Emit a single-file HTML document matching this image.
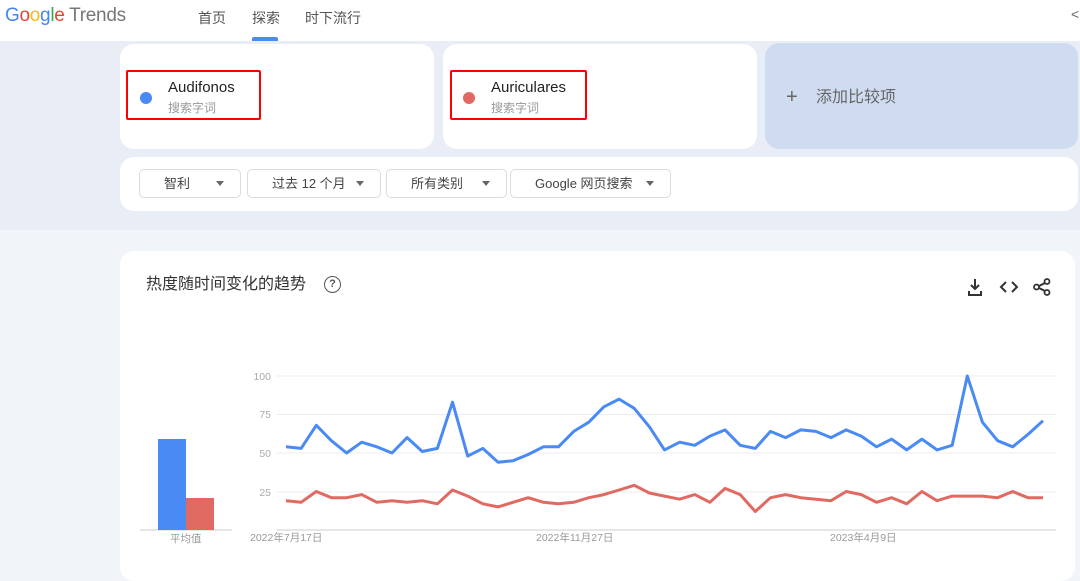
<!DOCTYPE html><html><head><meta charset="utf-8"><style>
*{margin:0;padding:0;box-sizing:border-box}
body{width:1080px;height:559px;overflow:hidden;background:#f1f4f9;font-family:"Liberation Sans","Noto Sans CJK SC",sans-serif;position:relative}
.a{position:absolute}
.card{position:absolute;background:#fff;border-radius:14px}
.btn{position:absolute;top:12px;height:29px;border:1px solid #dadce0;border-radius:5px;font-size:13px;color:#444;line-height:27px;padding-left:24px}
.btn:after{content:"";position:absolute;right:16px;top:11px;border:4.5px solid transparent;border-top:5px solid #666}
</style></head><body>
<div class="a" style="left:0;top:0;width:1080px;height:41px;background:#fff"></div>
<div class="a" style="left:0;top:41px;width:1080px;height:189px;background:#e8edf6"></div>
<div class="a" style="left:5px;top:5px;font-size:19px;letter-spacing:-0.3px"><span style="color:#4285f4">G</span><span style="color:#ea4335">o</span><span style="color:#fbbc05">o</span><span style="color:#4285f4">g</span><span style="color:#34a853">l</span><span style="color:#ea4335">e</span><span style="color:#777"> Trends</span></div>
<div class="a" style="left:198px;top:8px;font-size:14px;color:#555">首页</div>
<div class="a" style="left:252px;top:8px;font-size:14px;color:#555">探索</div>
<div class="a" style="left:252px;top:37px;width:26px;height:4px;background:#4a8af4;border-radius:2px 2px 0 0"></div>
<div class="a" style="left:305px;top:8px;font-size:14px;color:#555">时下流行</div>
<div class="a" style="left:1071px;top:6px;font-size:14px;color:#666">&lt;</div>
<div class="card" style="left:120px;top:44px;width:314px;height:105px"></div>
<div class="a" style="left:126px;top:70px;width:135px;height:50px;border:2px solid #f00;border-radius:2px"></div>
<div class="a" style="left:140px;top:92px;width:12px;height:12px;border-radius:50%;background:#4a8af4"></div>
<div class="a" style="left:168px;top:79px;font-size:15px;color:#222">Audifonos</div>
<div class="a" style="left:168px;top:99px;font-size:12px;color:#999">搜索字词</div>
<div class="card" style="left:443px;top:44px;width:314px;height:105px"></div>
<div class="a" style="left:450px;top:70px;width:137px;height:50px;border:2px solid #f00;border-radius:2px"></div>
<div class="a" style="left:463px;top:92px;width:12px;height:12px;border-radius:50%;background:#e06a62"></div>
<div class="a" style="left:491px;top:79px;font-size:15px;color:#222">Auriculares</div>
<div class="a" style="left:491px;top:99px;font-size:12px;color:#999">搜索字词</div>
<div class="card" style="left:765px;top:43px;width:313px;height:106px;background:#cfdcf0"></div>
<div class="a" style="left:786px;top:85px;font-size:20px;color:#666;line-height:24px">+</div>
<div class="a" style="left:816px;top:88px;font-size:16px;color:#666;line-height:20px">添加比较项</div>
<div class="card" style="left:120px;top:157px;width:958px;height:54px">
<div class="btn" style="left:19px;width:102px">智利</div>
<div class="btn" style="left:127px;width:134px">过去 12 个月</div>
<div class="btn" style="left:266px;width:121px">所有类别</div>
<div class="btn" style="left:390px;width:161px">Google 网页搜索</div>
</div>
<div class="card" style="left:120px;top:251px;width:955px;height:330px"></div>
<div class="a" style="left:146px;top:275px;font-size:16px;color:#333;line-height:20px">热度随时间变化的趋势</div>
<div class="a" style="left:324px;top:276px;width:17px;height:17px;border:1.5px solid #555;border-radius:50%;font-size:11px;text-align:center;line-height:14px;color:#555;font-weight:bold">?</div>
<svg class="a" style="left:960px;top:274px" width="100" height="26" viewBox="0 0 100 26">
<g fill="none" stroke="#333" stroke-width="2"><path d="M15 5v10M11 11l4 4 4-4M9 17v4h12v-4"/><path d="M46 8l-5 5 5 5M52 8l5 5-5 5"/><path d="M87 8l-10 5 10 5"/></g>
<g fill="#fff" stroke="#333" stroke-width="1.8"><circle cx="87" cy="7.5" r="2.5"/><circle cx="76.5" cy="13" r="2.5"/><circle cx="87" cy="18.5" r="2.5"/></g></svg>
<svg class="a" style="left:0;top:0" width="1080" height="559" id="ch">
<g stroke="#ececec" stroke-width="1"><line x1="277" y1="376" x2="1056" y2="376"/><line x1="277" y1="414.5" x2="1056" y2="414.5"/><line x1="277" y1="453" x2="1056" y2="453"/><line x1="277" y1="492" x2="1056" y2="492"/></g>
<line x1="277" y1="530" x2="1056" y2="530" stroke="#ccc"/>
<line x1="140" y1="530" x2="232" y2="530" stroke="#ccc"/>
<g font-size="10.5" fill="#aaa" text-anchor="end" font-family="Liberation Sans"><text x="271" y="380">100</text><text x="271" y="418">75</text><text x="271" y="457">50</text><text x="271" y="496">25</text></g>
<g font-size="10.5" fill="#999" font-family="Liberation Sans,Noto Sans CJK SC"><text x="250" y="541">2022年7月17日</text><text x="536" y="541">2022年11月27日</text><text x="830" y="541">2023年4月9日</text><text x="170" y="542">平均值</text></g>
<rect x="158" y="439" width="28" height="91" fill="#4a8af4"/><rect x="186" y="498" width="28" height="32" fill="#e06a62"/>
</svg>
<script>
var b=[54,53,68,58,50,57,54,50,60,51,53,83,48,53,44,45,49,54,54,64,70,80,85,79,67,52,57,55,61,65,55,53,64,60,65,64,60,65,61,54,59,52,59,52,55,100,70,58,54,62,71];
var r=[19,18,25,21,21,23,18,19,18,19,17,26,22,17,15,18,21,18,17,18,21,23,26,29,24,22,20,23,18,27,23,12,21,23,21,20,19,25,23,18,21,17,25,19,22,22,22,21,25,21,21];
function pts(a){var s=(1043-286)/(a.length-1);return a.map(function(v,i){return (286+i*s).toFixed(1)+","+(530-v*1.54).toFixed(1)}).join(" ")}
var svg=document.getElementById("ch"),ns="http://www.w3.org/2000/svg";
[[r,"#e06a62"],[b,"#4a8af4"]].forEach(function(p){var e=document.createElementNS(ns,"polyline");e.setAttribute("points",pts(p[0]));e.setAttribute("fill","none");e.setAttribute("stroke",p[1]);e.setAttribute("stroke-width","3");e.setAttribute("stroke-linejoin","round");svg.appendChild(e)});
</script>
</body></html>
